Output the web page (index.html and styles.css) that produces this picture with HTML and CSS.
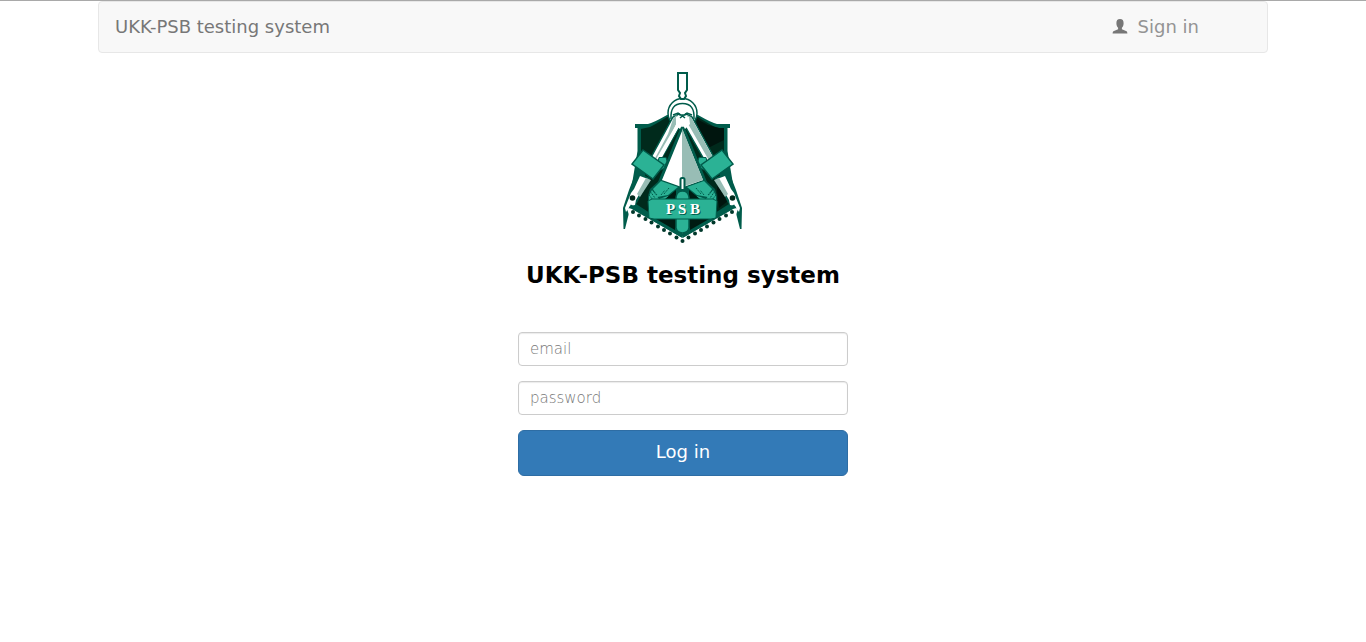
FILE: index.html
```
<!DOCTYPE html>
<html lang="en">
<head>
<meta charset="utf-8">
<meta name="viewport" content="width=device-width, initial-scale=1">
<title>UKK-PSB testing system</title>
<link rel="stylesheet" href="styles.css">
</head>
<body>
<nav class="navbar">
  <a class="brand" href="#">UKK-PSB testing system</a>
  <a class="sign-in" href="#">
    <svg class="user-icon" viewBox="0 0 16 16" aria-hidden="true"><path d="M8 0C5.500 0 4.300 1.500 4.400 4.300c0 2 .8 3.600 1.700 4.500v1.500L2 12c-.9.400-1.300.9-1.400 2.400h14.800c-.1-1.500-.5-2-1.400-2.400l-4.100-1.700V8.800c.9-.9 1.700-2.500 1.700-4.500C11.700 1.500 10.500 0 8 0z"/></svg>
    <span>Sign in</span>
  </a>
</nav>
<main class="login">
  <svg class="logo" viewBox="622 71 122 173" role="img" aria-label="PSB emblem">
    <defs>
      <g id="shield-half">
        <path d="M682.500 113 667 115Q653 123 648 124H635V128H637.500V151L632 184 628 206 682.500 238z" fill="#005c4b"/>
        <path d="M682.500 117H667Q656 124 650 127L641 129V150L646 180 636 204 650 213 682.500 232z" fill="#002a1c"/>
      </g>
      <g id="lower-half">
        <path d="M636 172 650 178 648 184 641 195 637 203 631 207 629 213 625 229 623.500 229 623 208 629 190z" fill="#005c4b"/>
        <path d="M640 176 648 179 636 200 635 205 630 206 626 212 625 208 631 193 634 189z" fill="#fff"/>
        <path d="M646 178 651 180 640 197 637 194z" fill="#98bdb5"/>
        <circle cx="632.500" cy="198" r="2.800" fill="#002a1c"/>
        <path d="M630 206 682.500 236" stroke="#005c4b" stroke-width="3.500" fill="none"/>
        <path d="M627 209 629 208 682.500 239V243H670L630 218z" fill="#fff"/>
        <path d="M657 166 659 157.500H666L667 161 664 168 661 170z" fill="#2bb295" stroke="#005c4b"/>
        <path d="M643 150 664 165 653 179 632 164z" fill="#2bb295" stroke="#005c4b" stroke-width="1.500"/>
        <path d="M648 196 650 189 660 180 682 188V208H648z" fill="#005c4b"/>
        <path d="M653 189 661 181 678 187 668 195 657 197z" fill="#2bb295"/>
        <path d="M649 196 652 190 659 199 668 196 672 201H649z" fill="#2bb295"/>
        <path d="M650 191 655 198M652 189 657 195M664 194 669 188M661 195 665 190M649 195 653 200" stroke="#005c4b" stroke-width="1" stroke-dasharray="2 1" fill="none"/>
        <path d="M665 199 676 190V199zM656 219H675V230z" fill="#001b12"/>
        <g fill="#00382b"><circle cx="633" cy="212" r="2"/><circle cx="639" cy="215.500" r="2"/><circle cx="645.500" cy="219" r="2"/><circle cx="651.500" cy="222.500" r="2"/><circle cx="658" cy="226.500" r="2"/><circle cx="664" cy="230" r="2"/><circle cx="670" cy="233.500" r="2"/><circle cx="676.500" cy="237.500" r="2"/></g>
      </g>
    </defs>
    <use href="#shield-half"/>
    <use href="#shield-half" transform="translate(1365) scale(-1 1)"/>
    <path d="M697 119 708 125 719 128H724V140L704 150 696 130z" fill="#00150e"/>
    <path d="M718 183 728 201 719 208 717 190z" fill="#00150e"/>
    <path d="M682.500 126 660 181 682.500 189 705 181z" fill="#fff" stroke="#005c4b" stroke-width="3"/>
    <path d="M682 128V187L703 180z" fill="#98bdb5"/>
    <circle cx="682.500" cy="113" r="14.500" fill="#fff" stroke="#005c4b" stroke-width="1.500"/>
    <path d="M671 119Q670 103.500 682.500 103.500T694 119" fill="#fff" stroke="#005c4b" stroke-width="1.500"/>
    <path d="M673 117 679 114 684 119 656 168 648 163zM692 117 686 114 681 119 709 168 717 163z" fill="#fff" stroke="#005c4b" stroke-width="1.500"/>
    <path d="M673 119 676 115 679 118 661 157 656 163 653 162 668 134zM687 115 691 117 715 161 711 164 687 122z" fill="#98bdb5"/>
    <path d="M673 130 678 121 681 123 660 161 655 161z" fill="#fff"/>
    <path d="M676 117 682.500 115 689 117 690 124 685 129 682.500 124 680 129 676 126z" fill="#fff"/>
    <path d="M673 115 678 113 681 115H684L687 113 692 115M680 118 682.500 116 685 118" fill="none" stroke="#005c4b" stroke-width="1.500"/>
    <use href="#lower-half"/>
    <use href="#lower-half" transform="translate(1365) scale(-1 1)"/>
    <path d="M678 73H687V90L685 93 686 96 684 99H681L679 96 680 93 678 90z" fill="#fff" stroke="#005c4b" stroke-width="2"/>
    <path d="M676 197Q677 191 682.500 191T689 197V228Q688 233 682.500 233T676 228z" fill="#2bb295" stroke="#005c4b" stroke-width="1.500"/>
    <path d="M648 201 652 199H713L717 201 716 218 711 219H654L649 218z" fill="#2bb295" stroke="#005c4b"/>
    <rect x="680.500" y="178" width="4" height="12" rx="1.500" fill="#fff" stroke="#005c4b" stroke-width="2"/>
    <circle cx="682.500" cy="241" r="2" fill="#00382b"/>
    <text class="logo-shadow" x="684" y="215" text-anchor="middle" aria-hidden="true">P S B</text>
    <text class="logo-text" x="683" y="214" text-anchor="middle">P S B</text>
  </svg>
  <h1 class="title">UKK-PSB testing system</h1>
  <form class="form">
    <input class="field" type="email" placeholder="email" aria-label="email">
    <input class="field" type="password" placeholder="password" aria-label="password">
    <button class="submit" type="submit">Log in</button>
  </form>
</main>
</body>
</html>
```
FILE: styles.css
```
* {
  box-sizing: border-box;
}

body {
  margin: 0;
  border-top: 1px solid #a9a9a9;
  background: #fff;
  font-family: "DejaVu Sans", Verdana, sans-serif;
  color: #000;
}

.navbar {
  display: flex;
  align-items: center;
  justify-content: space-between;
  max-width: 1170px;
  min-height: 52px;
  margin: 0 auto;
  padding: 0 68px 0 16px;
  border: 1px solid #e7e7e7;
  border-radius: 4px;
  background: #f8f8f8;
  font-size: 18px;
  line-height: 20px;
}

.brand {
  color: #777;
  text-decoration: none;
}

.sign-in {
  display: flex;
  align-items: center;
  gap: 10px;
  color: #949494;
  text-decoration: none;
}

.user-icon {
  width: 16px;
  height: 16px;
  fill: #777;
}

.login {
  display: flex;
  flex-direction: column;
  align-items: center;
  padding: 18px 15px;
}

.logo {
  width: 122px;
  height: 173px;
}

.logo-text,
.logo-shadow {
  font: bold 15px "Liberation Serif", serif;
  fill: #fff;
}

.logo-shadow {
  fill: #005c4b;
}

.title {
  margin: 16px 0 0;
  font-size: 23px;
  line-height: 30px;
}

.form {
  display: flex;
  flex-direction: column;
  gap: 15px;
  width: 100%;
  max-width: 330px;
  margin-top: 42px;
}

.field {
  width: 100%;
  height: 34px;
  padding: 6px 11px;
  border: 1px solid #ccc;
  border-radius: 4px;
  background: #fff;
  box-shadow: inset 0 1px 1px rgba(0, 0, 0, 0.08);
  font-family: "DejaVu Sans Light", "DejaVu Sans", sans-serif;
  font-weight: 200;
  font-size: 15px;
  line-height: 20px;
  color: #555;
}

.field::placeholder {
  color: #777;
  opacity: 1;
}

.submit {
  min-height: 46px;
  padding: 9px 16px 11px;
  border: 1px solid #2e6da4;
  border-radius: 6px;
  background: #337ab7;
  font-family: inherit;
  font-size: 18px;
  line-height: 24px;
  color: #fff;
}
```
